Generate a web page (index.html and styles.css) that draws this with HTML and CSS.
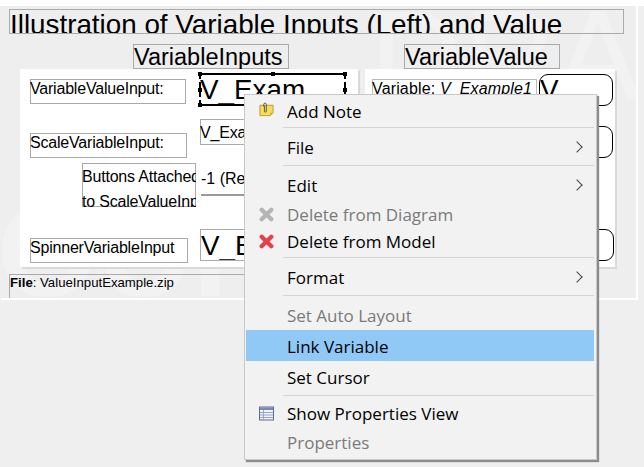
FILE: index.html
```html
<!DOCTYPE html>
<html lang="en">
<head>
  <meta charset="UTF-8" />
  <title>Illustration of Variable Inputs</title>
  <link rel="stylesheet" href="styles.css">
</head>
<body>

  <div class="canvas">
    <div class="watermark mark-top">DRAFT</div>
    <div class="watermark mark-bottom">OUI</div>

    <div class="title">Illustration of Variable Inputs (Left) and Value</div>

    <div class="headings">
      <div class="heading heading-inputs">VariableInputs</div>
      <div class="heading heading-value">VariableValue</div>
    </div>

    <div class="panels">
      <div class="panel panel-inputs">
        <div class="node label label-value">VariableValueInput:</div>
        <div class="node selected"><span class="big">V_Example1</span>
          <i class="handle h-tl"></i><i class="handle h-tm"></i><i class="handle h-tr"></i>
          <i class="handle h-ml"></i><i class="handle h-mr"></i>
          <i class="handle h-bl"></i><i class="handle h-bm"></i><i class="handle h-br"></i>
        </div>
        <div class="node label label-scale">ScaleVariableInput:</div>
        <div class="node small-input">V_Example1</div>
        <div class="node label label-buttons">Buttons Attached<br>to ScaleValueInput</div>
        <div class="node scale-value">-1 (Real)</div>
        <div class="node label label-spinner">SpinnerVariableInput</div>
        <div class="node spinner-input"><span class="big">V_Example1</span></div>
      </div>

      <div class="panel panel-value">
        <div class="node var-label">Variable: <em>V_Example1</em></div>
        <div class="node round round-1"><span class="big">V</span></div>
        <div class="node round round-2"></div>
        <div class="node round round-3"></div>
      </div>
    </div>

    <div class="file"><strong>File</strong>: ValueInputExample.zip</div>
  </div>

  <div class="menu">
    <div class="group group-first">
      <div class="item">
        <svg class="icon icon-note" viewBox="0 0 16 16">
          <path d="M1 3.500h14v8l-3 3H1z" fill="#f5dc5a" stroke="#b89b2a"/>
          <path d="M12 14.500v-3h3z" fill="#c9ad3a"/>
          <path d="M5 5V2.600a1.400 1.400 0 0 1 2.800 0v7.200a1 1 0 0 1-2 0V4" fill="none" stroke="#555" stroke-width="1"/>
        </svg>
        <span>Add Note</span>
      </div>
    </div>
    <div class="sep"></div>
    <div class="group">
      <div class="item"><span>File</span><i class="chevron"></i></div>
    </div>
    <div class="sep"></div>
    <div class="group group-edit">
      <div class="item item-edit"><span>Edit</span><i class="chevron"></i></div>
      <div class="item item-diagram off">
        <svg class="icon" viewBox="0 0 14 14"><path d="M2.500 2.500l9 9M11.500 2.500l-9 9" stroke="#b4b4b4" stroke-width="4" stroke-linecap="round"/></svg>
        <span>Delete from Diagram</span>
      </div>
      <div class="item">
        <svg class="icon" viewBox="0 0 14 14"><path d="M2.500 2.500l9 9M11.500 2.500l-9 9" stroke="#e2434b" stroke-width="4" stroke-linecap="round"/></svg>
        <span>Delete from Model</span>
      </div>
    </div>
    <div class="sep"></div>
    <div class="group">
      <div class="item"><span>Format</span><i class="chevron"></i></div>
    </div>
    <div class="sep"></div>
    <div class="group group-layout">
      <div class="item off"><span>Set Auto Layout</span></div>
      <div class="item item-active"><span>Link Variable</span></div>
      <div class="item item-cursor"><span>Set Cursor</span></div>
    </div>
    <div class="sep"></div>
    <div class="group group-last">
      <div class="item item-show">
        <svg class="icon" viewBox="0 0 15 14">
          <rect x="0.500" y="0.500" width="14" height="13" fill="#eef1f8" stroke="#5d6a94"/>
          <rect x="1" y="1" width="13" height="2.500" fill="#7d8bb3"/>
          <path d="M1 6h13M1 8.500h13M1 11h13M4.500 3.500V13" stroke="#9aa5c4" fill="none"/>
        </svg>
        <span>Show Properties View</span>
      </div>
      <div class="item off"><span>Properties</span></div>
    </div>
  </div>

</body>
</html>
```

FILE: styles.css
```css
html, body {
  margin: 0;
  height: 100%;
}
body {
  background: #efefef;
  font-family: "Liberation Sans", Arial, sans-serif;
  color: #000;
  overflow: hidden;
  border-top: 6px solid #fff;
  box-sizing: border-box;
}

/* diagram */
.canvas {
  position: relative;
  width: 637px;
  height: 294px;
  margin-left: 1px;
  padding: 3px 0 0 8px;
  box-sizing: border-box;
  background: #eeeeee;
  border-right: 2px solid #fff;
  border-bottom: 2px solid #fff;
  overflow: hidden;
}
.watermark {
  position: absolute;
  color: #f2f2f2;
  line-height: 1;
  white-space: nowrap;
}
.mark-top {
  left: 369px;
  top: -14px;
  font-size: 128px;
}
.mark-bottom {
  left: -4px;
  top: 180px;
  font-size: 130px;
  font-weight: bold;
}
.title {
  position: relative;
  width: 615px;
  height: 25px;
  box-sizing: border-box;
  border: 1px solid #aaa;
  font-size: 27.800px;
  line-height: 30px;
  white-space: nowrap;
  overflow: hidden;
}
.headings {
  position: relative;
  display: flex;
  margin: 10px 0 0 124px;
}
.heading {
  width: 156px;
  height: 25px;
  box-sizing: border-box;
  border: 1px solid #aaa;
  font-size: 23.500px;
  line-height: 24px;
  white-space: nowrap;
}
.heading-value {
  margin-left: 115px;
}
.panels {
  position: relative;
  display: flex;
  gap: 7px;
  margin: 0 0 0 11px;
}
.panel {
  position: relative;
  height: 198px;
  background: #fff;
  box-shadow: 2px 2px 0 #d9d9d9;
}
.panel-inputs {
  width: 338px;
}
.panel-value {
  width: 250px;
}

/* nodes sit on the panels at free positions */
.node {
  position: absolute;
  box-sizing: border-box;
  white-space: nowrap;
  overflow: hidden;
}
.label {
  box-shadow: inset 0 0 0 1px #aaa;
  height: 25px;
  font-size: 16px;
  letter-spacing: -0.200px;
  line-height: 19px;
  left: 10px;
}
.label-value {
  top: 10px;
  width: 156px;
}
.label-scale {
  top: 64px;
  width: 157px;
}
.label-buttons {
  top: 94px;
  left: 62px;
  width: 114px;
  height: 44px;
  line-height: 25px;
  padding-top: 1px;
}
.label-spinner {
  top: 169px;
  width: 158px;
}
.big {
  font-size: 27.800px;
}
.selected {
  left: 179px;
  top: 4px;
  width: 147px;
  height: 33px;
  overflow: visible;
  border-top: 2px solid #000;
  border-bottom: 2px solid #000;
  border-left: 2px dashed #000;
  border-right: 2px dashed #000;
  line-height: 30px;
}
.selected .big {
  display: block;
  width: 106px;
  margin-left: -1px;
  overflow: hidden;
}
.handle {
  position: absolute;
  width: 4px;
  height: 4px;
  background: #000;
}
.h-tl { left: -3px; top: -3px; }
.h-tm { left: 70px; top: -3px; }
.h-tr { right: -3px; top: -3px; }
.h-ml { left: -3px; top: 13px; }
.h-mr { right: -3px; top: 13px; }
.h-bl { left: -3px; bottom: -3px; }
.h-bm { left: 70px; bottom: -3px; }
.h-br { right: -3px; bottom: -3px; }
.small-input {
  left: 180px;
  top: 50px;
  width: 140px;
  height: 26px;
  box-shadow: inset 0 0 0 1px #aaa;
  font-size: 16px;
  letter-spacing: -0.200px;
  line-height: 27px;
}
.scale-value {
  left: 181px;
  top: 96px;
  width: 140px;
  height: 31px;
  border-bottom: 2px solid #999;
  font-size: 16px;
  line-height: 28px;
}
.spinner-input {
  left: 180px;
  top: 160px;
  width: 140px;
  height: 32px;
  border: 1px solid #aaa;
  line-height: 32px;
}
.var-label {
  left: 7px;
  top: 10px;
  width: 165px;
  height: 25px;
  font-size: 16px;
  letter-spacing: 0.150px;
  line-height: 20px;
  box-shadow: inset 0 0 0 1px #bbb;
}
.round {
  left: 174px;
  width: 74px;
  height: 32px;
  border: 1px solid #000;
  border-radius: 9px;
  line-height: 30px;
}
.round-1 { top: 5px; }
.round-2 { top: 57px; }
.round-3 { top: 160px; width: 75px; }
.file {
  position: relative;
  width: 490px;
  height: 25px;
  margin-top: 7px;
  box-sizing: border-box;
  border: 1px solid #aaa;
  font-size: 13.200px;
  line-height: 16px;
}

/* context menu */
.menu {
  position: absolute;
  left: 244px;
  top: 94px;
  width: 353px;
  height: 366px;
  box-sizing: border-box;
  padding: 1px 2px 0 1px;
  background: #f2f2f2;
  border: 1px solid #c8c8c8;
  box-shadow: 2px 2px 1px #8c8c8c;
  font-family: "Open Sans", "Noto Sans", sans-serif;
  font-size: 17px;
}
.group {
  padding: 7px 0 4px;
}
.group-first {
  padding: 3px 0 2px;
}
.group-edit {
  padding: 7px 0 2px;
}
.group-layout {
  padding: 7px 0 4px;
}
.group-last {
  padding: 5px 0 0;
}
.sep {
  height: 1px;
  margin-left: 37px;
  background: #d4d4d4;
}
.item {
  position: relative;
  height: 26px;
  line-height: 26px;
  padding-left: 41px;
}
.item-edit {
  margin-bottom: 3px;
}
.item-diagram {
  margin-bottom: 1px;
}
.item-show {
  margin-bottom: 3px;
}
.item-active {
  height: 31px;
  line-height: 34px;
  margin-top: 1px;
  background: #90c8f6;
}
.item-cursor {
  margin-top: 4px;
}
.off {
  color: #7a7a7a;
}
.icon {
  position: absolute;
  left: 13px;
  top: 5px;
  width: 15px;
  height: 15px;
}
.icon-note {
  top: 3px;
}
.chevron {
  position: absolute;
  right: 13px;
  top: 8px;
  width: 7px;
  height: 7px;
  border-top: 1.500px solid #444;
  border-right: 1.500px solid #444;
  transform: rotate(45deg);
}
```
